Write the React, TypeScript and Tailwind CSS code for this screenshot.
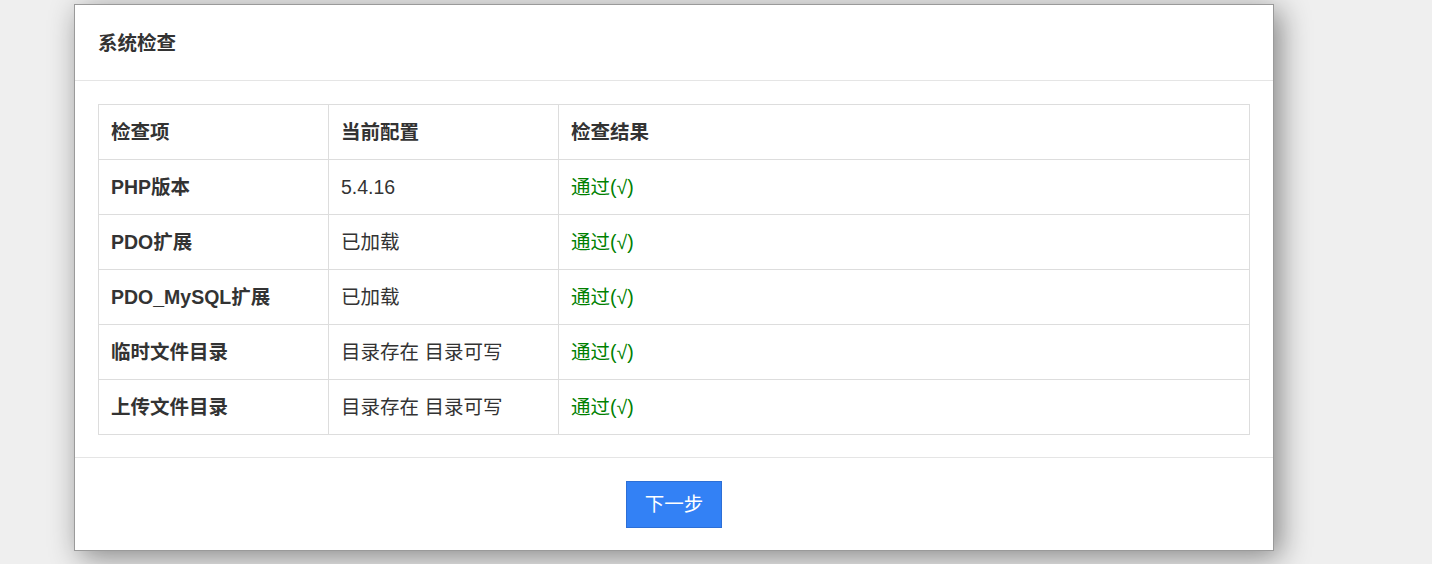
const rows = [
  { name: "PHP版本", value: "5.4.16" },
  { name: "PDO扩展", value: "已加载" },
  { name: "PDO_MySQL扩展", value: "已加载" },
  { name: "临时文件目录", value: "目录存在 目录可写" },
  { name: "上传文件目录", value: "目录存在 目录可写" },
];

export default function App() {
  return (
    <div
      className="min-h-screen bg-[#efefef] pl-[74px] pt-[4px] text-[#333]"
      style={{ fontFamily: '"Liberation Sans", "Noto Sans CJK SC", sans-serif' }}
    >
      <div className="w-[1200px] border border-[#9a9a9a] bg-white shadow-[6px_6px_28px_rgba(0,0,0,0.45)]">
        <div className="flex h-[76px] items-center border-b border-[#e5e5e5] px-[23px] pt-[2px]">
          <h3 className="text-[19.5px] font-bold">系统检查</h3>
        </div>

        <div className="px-[23px] pt-[23px] pb-[22px]">
          <table className="w-full border-collapse border border-[#ddd] text-[19.5px]">
            <thead>
              <tr className="h-[55px]">
                <th className="w-[230px] border border-[#ddd] px-3 pt-[2px] text-left font-bold">检查项</th>
                <th className="w-[230px] border border-[#ddd] px-3 pt-[2px] text-left font-bold">当前配置</th>
                <th className="border border-[#ddd] px-3 pt-[2px] text-left font-bold">检查结果</th>
              </tr>
            </thead>
            <tbody>
              {rows.map((row) => (
                <tr key={row.name} className="h-[55px]">
                  <td className="border border-[#ddd] px-3 pt-[2px] font-bold">{row.name}</td>
                  <td className="border border-[#ddd] px-3 pt-[2px]">{row.value}</td>
                  <td className="border border-[#ddd] px-3 pt-[2px] text-[#008000]">通过(√)</td>
                </tr>
              ))}
            </tbody>
          </table>
        </div>

        <div className="flex justify-center border-t border-[#e5e5e5] pt-[23px] pb-[22px]">
          <button className="h-[47px] w-[96px] border border-[#2d6fd6] bg-[#3381f5] text-[19.5px] text-white">
            下一步
          </button>
        </div>
      </div>
    </div>
  );
}
